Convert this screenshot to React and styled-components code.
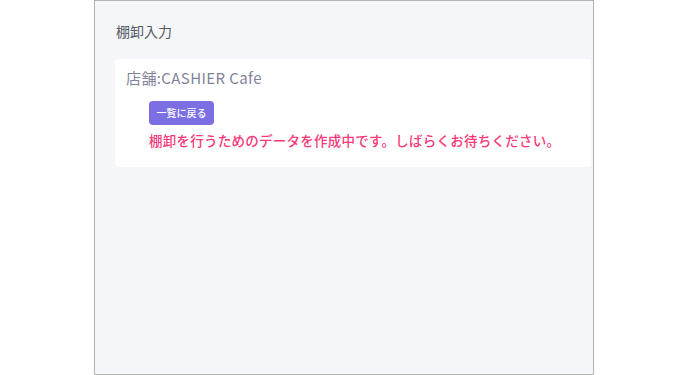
import React from "react";
import styled, { createGlobalStyle } from "styled-components";

const Global = createGlobalStyle`
  html, body { margin: 0; padding: 0; background: #ffffff; }
  body { font-family: "Noto Sans CJK JP", "Noto Sans", sans-serif; }
`;

const Frame = styled.div`
  box-sizing: border-box;
  margin-left: 94px;
  width: 500px;
  height: 375px;
  border: 1px solid #b3b3b3;
  background: #f5f6fa;
  padding: 17px 2px 0 20px;
  overflow: hidden;
`;

const PageTitle = styled.h1`
  margin: 0 0 0 1px;
  font-size: 14px;
  font-weight: 400;
  line-height: 26px;
  color: #555a63;
`;

const Card = styled.section`
  margin-top: 15px;
  background: #ffffff;
  border-radius: 4px;
  padding: 7px 11px 16px 11px;
`;

const StoreName = styled.h2`
  margin: 0;
  font-size: 15px;
  font-weight: 400;
  letter-spacing: 0.4px;
  line-height: 24px;
  color: #7f849c;
`;

const Body = styled.div`
  padding: 11px 0 0 23px;
  display: flex;
  flex-direction: column;
  align-items: flex-start;
`;

const BackButton = styled.button`
  height: 24px;
  width: 65px;
  padding: 0;
  border: none;
  border-radius: 4px;
  background: #7b6fe3;
  color: #ffffff;
  font-family: "Noto Sans CJK JP", "Noto Sans", sans-serif;
  font-size: 10px;
  font-weight: 500;
  line-height: 24px;
  cursor: pointer;
`;

const Notice = styled.p`
  margin: 4px 0 0 0;
  font-size: 13.5px;
  font-weight: 500;
  letter-spacing: 0.25px;
  line-height: 22px;
  color: #f7397a;
`;

export default function App() {
  return (
    <>
      <Global />
      <Frame>
        <PageTitle>棚卸入力</PageTitle>
        <Card>
          <StoreName>店舗:CASHIER Cafe</StoreName>
          <Body>
            <BackButton>一覧に戻る</BackButton>
            <Notice>棚卸を行うためのデータを作成中です。しばらくお待ちください。</Notice>
          </Body>
        </Card>
      </Frame>
    </>
  );
}
